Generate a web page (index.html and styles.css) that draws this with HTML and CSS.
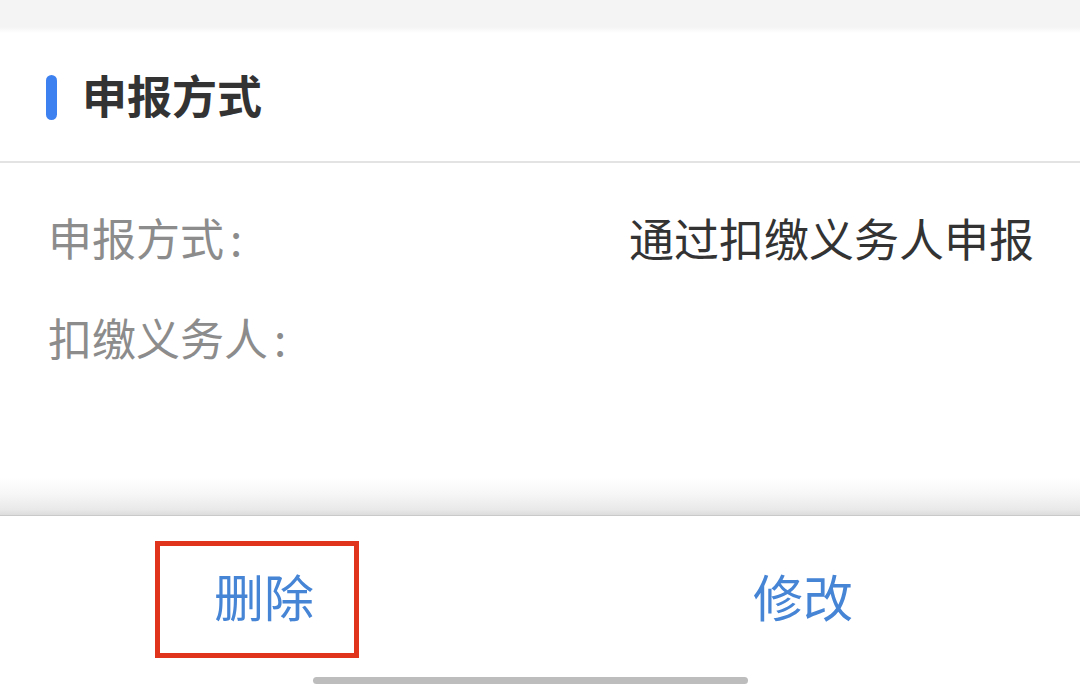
FILE: index.html
```html
<!DOCTYPE html>
<html lang="zh-CN">
<head>
    <meta charset="UTF-8">
    <meta name="viewport" content="width=device-width, initial-scale=1.0">
    <title>申报方式</title>
    <link rel="stylesheet" href="styles.css">
</head>
<body>
    <div class="top-band"></div>

    <!-- Section header -->
    <div class="section-header">
        <span class="section-mark"></span>
        <h2 class="section-title">申报方式</h2>
    </div>

    <!-- Info rows -->
    <div class="info-list">
        <div class="info-row">
            <span class="info-label">申报方式<span class="colon">:</span></span>
            <span class="info-value">通过扣缴义务人申报</span>
        </div>
        <div class="info-row">
            <span class="info-label">扣缴义务人<span class="colon">:</span></span>
            <span class="info-value"></span>
        </div>
    </div>

    <div class="bottom-shade"></div>

    <!-- Action bar -->
    <div class="action-bar">
        <div class="action-row">
            <div class="action-cell left">
                <button type="button" class="action-button marked">删除</button>
            </div>
            <div class="action-cell right">
                <button type="button" class="action-button">修改</button>
            </div>
        </div>
        <div class="home-indicator"></div>
    </div>
</body>
</html>
```

FILE: styles.css
```css
body {
    margin: 0;
    width: 1080px;
    height: 688px;
    overflow: hidden;
    background-color: #fff;
    font-family: "Noto Sans CJK SC", "Noto Sans", sans-serif;
}

.top-band {
    height: 33px;
    background: linear-gradient(#f4f4f4 0, #f4f4f4 82%, #fff 100%);
}

.section-header {
    height: 128px;
    display: flex;
    align-items: center;
    padding-left: 46px;
    border-bottom: 2px solid #e3e3e3;
}

.section-mark {
    width: 11px;
    height: 45px;
    border-radius: 6px;
    background-color: #3d80f0;
    margin-right: 25px;
}

.section-title {
    margin: 0 0 6px 0;
    font-size: 45px;
    line-height: 45px;
    font-weight: 700;
    color: #333;
}

.info-list {
    padding: 24px 46px 91px 48px;
}

.info-row {
    height: 100px;
    display: flex;
    align-items: center;
    justify-content: space-between;
}

.info-label {
    font-size: 44px;
    line-height: 44px;
    color: #8c8c8c;
}

.info-label .colon {
    margin-left: 6px;
}

.info-value {
    font-size: 45px;
    line-height: 45px;
    color: #333;
}

.bottom-shade {
    height: 37px;
    background: linear-gradient(#fff 0, #f6f6f6 45%, #e9e9e9 85%, #dcdcdc 100%);
    border-bottom: 1px solid #c9c9c9;
}

.action-bar {
    height: 171px;
    padding-top: 25px;
    box-sizing: border-box;
}

.action-row {
    display: flex;
    height: 117px;
}

.action-cell {
    flex: 1;
    display: flex;
    align-items: center;
    justify-content: center;
}

.action-cell.left {
    padding-right: 32px;
}

.action-cell.right {
    padding-right: 20px;
}

.action-button {
    font-family: inherit;
    font-size: 50px;
    line-height: 50px;
    color: #4684d6;
    background: none;
    border: none;
    padding: 0 0 10px 0;
    cursor: pointer;
}

.action-button.marked {
    border: 5px solid #e0341c;
    width: 204px;
    height: 117px;
    padding: 0 40px 10px 54px;
    box-sizing: border-box;
}

.home-indicator {
    width: 435px;
    height: 7px;
    border-radius: 4px;
    background-color: #bdbdbd;
    margin: 19px 0 0 313px;
}
```
